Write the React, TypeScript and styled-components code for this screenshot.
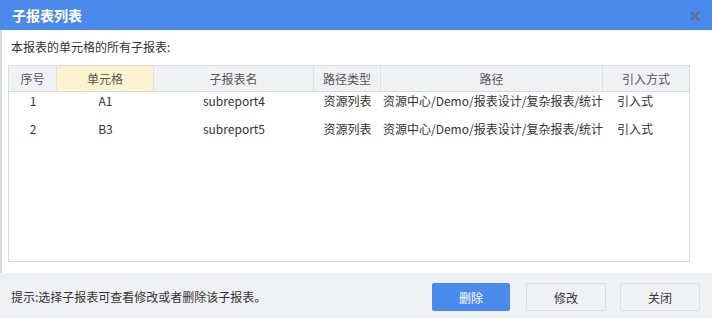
import React from 'react';
import styled, { createGlobalStyle } from 'styled-components';

const GlobalStyle = createGlobalStyle`
  html, body {
    margin: 0;
    padding: 0;
    background: #fff;
  }
  body {
    font-family: "Noto Sans CJK SC", "Noto Sans", sans-serif;
    font-size: 12px;
    color: #333;
  }
`;

const Dialog = styled.div`
  width: 712px;
  height: 318px;
  display: flex;
  flex-direction: column;
  background: #fff;
  box-sizing: border-box;
`;

const Header = styled.div`
  height: 30px;
  flex: none;
  background: #4b89ea;
  display: flex;
  align-items: center;
  justify-content: space-between;
  padding: 0 12px 0 12px;
`;

const Title = styled.div`
  color: #fff;
  font-size: 14px;
  font-weight: bold;
  line-height: 30px;
`;

const Close = styled.div`
  width: 10px;
  height: 10px;
  display: flex;
  margin-top: 1px;
`;

const Body = styled.div`
  flex: 1;
  border-left: 2px solid #dadbe0;
  padding: 8px 22px 11px 6px;
  display: flex;
  flex-direction: column;
`;

const Intro = styled.div`
  line-height: 18px;
  padding-left: 3px;
  margin-bottom: 9px;
  color: #333;
`;

const Table = styled.div`
  flex: 1;
  border: 1px solid #d9dade;
  display: flex;
  flex-direction: column;
`;

const cols = '48px 97px 160px 67px 222px 1fr';

const HeadRow = styled.div`
  display: grid;
  grid-template-columns: ${cols};
  height: 25px;
  background: #f0f1f5;
  border-bottom: 1px solid #d9dade;
`;

const HeadCell = styled.div<{ $active?: boolean; $last?: boolean }>`
  display: flex;
  align-items: center;
  justify-content: center;
  color: #555;
  background: ${p => (p.$active ? '#fdf4cf' : 'transparent')};
  border-right: ${p => (p.$last ? 'none' : '1px solid #dfe0e4')};
`;

const Row = styled.div`
  display: grid;
  grid-template-columns: ${cols};
  height: 28px;
`;

const Cell = styled.div<{ $align?: 'left' | 'center'; $pad?: number; $padRight?: number }>`
  line-height: 18px;
  text-align: ${p => p.$align ?? 'center'};
  padding-left: ${p => p.$pad ?? 0}px;
  padding-right: ${p => p.$padRight ?? 0}px;
  white-space: nowrap;
  overflow: hidden;
  color: #333;
`;

const Footer = styled.div`
  height: 45px;
  flex: none;
  background: #f0f1f5;
  display: flex;
  align-items: center;
  padding: 0 12px 0 11px;
`;

const Hint = styled.div`
  flex: 1;
  color: #333;
  margin-top: 1px;
`;

const Button = styled.button<{ $primary?: boolean; $width?: number; $gap?: number }>`
  width: ${p => p.$width ?? 80}px;
  height: 28px;
  margin-left: ${p => p.$gap ?? 16}px;
  border-radius: 2px;
  font-family: inherit;
  font-size: 12px;
  border: 1px solid ${p => (p.$primary ? '#4b89ea' : '#dcdde2')};
  background: ${p => (p.$primary ? '#4b89ea' : '#f0f1f5')};
  color: ${p => (p.$primary ? '#fff' : '#333')};
  padding: 0;
  margin-top: 3px;
`;

const rows = [
  { no: '1', cell: 'A1', name: 'subreport4' },
  { no: '2', cell: 'B3', name: 'subreport5' },
];

export default function App() {
  return (
    <Dialog>
      <GlobalStyle />
      <Header>
        <Title>子报表列表</Title>
        <Close>
          <svg width="10" height="10" viewBox="0 0 10 10">
            <path d="M1 1L9 9M9 1L1 9" stroke="#5d6d85" strokeWidth="2" />
          </svg>
        </Close>
      </Header>
      <Body>
        <Intro>本报表的单元格的所有子报表:</Intro>
        <Table>
          <HeadRow>
            <HeadCell>序号</HeadCell>
            <HeadCell $active>单元格</HeadCell>
            <HeadCell>子报表名</HeadCell>
            <HeadCell>路径类型</HeadCell>
            <HeadCell>路径</HeadCell>
            <HeadCell $last>引入方式</HeadCell>
          </HeadRow>
          {rows.map(r => (
            <Row key={r.no}>
              <Cell>{r.no}</Cell>
              <Cell>{r.cell}</Cell>
              <Cell>{r.name}</Cell>
              <Cell>资源列表</Cell>
              <Cell $align="left" $pad={2} $padRight={6}>资源中心/Demo/报表设计/复杂报表/统计</Cell>
              <Cell $align="left" $pad={14}>引入式</Cell>
            </Row>
          ))}
        </Table>
      </Body>
      <Footer>
        <Hint>提示:选择子报表可查看修改或者删除该子报表。</Hint>
        <Button $primary $width={78}>删除</Button>
        <Button $gap={16}>修改</Button>
        <Button $gap={14}>关闭</Button>
      </Footer>
    </Dialog>
  );
}
